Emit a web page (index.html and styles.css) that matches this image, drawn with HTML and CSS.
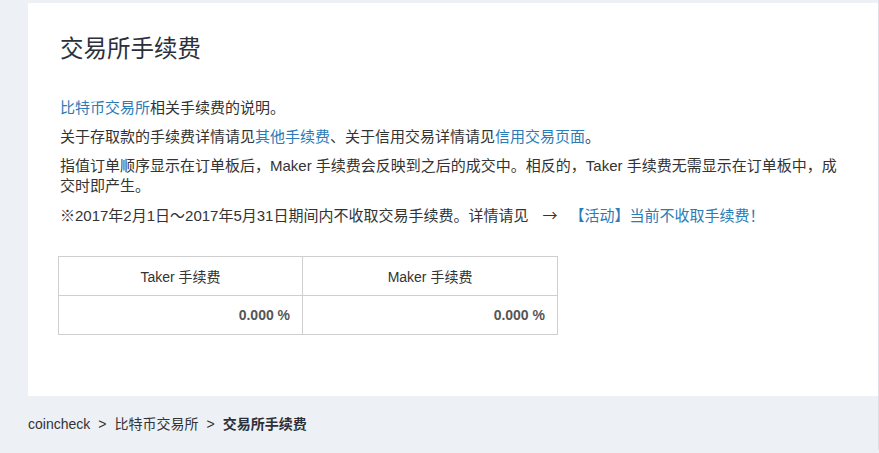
FILE: index.html
```html
<!DOCTYPE html>
<html lang="zh-CN">
<head>
<meta charset="utf-8">
<title>交易所手续费</title>
<link rel="stylesheet" href="styles.css">
</head>
<body>
<div class="page">
  <main class="card">
    <h1 class="title">交易所手续费</h1>
    <p class="para"><a class="link" href="#">比特币交易所</a>相关手续费的说明。</p>
    <p class="para">关于存取款的手续费详情请见<a class="link" href="#">其他手续费</a>、关于信用交易详情请见<a class="link" href="#">信用交易页面</a>。</p>
    <p class="para">指值订单顺序显示在订单板后，Maker 手续费会反映到之后的成交中。相反的，Taker 手续费无需显示在订单板中，成交时即产生。</p>
    <p class="para">※2017年2月1日～2017年5月31日期间内不收取交易手续费。详情请见<span class="arrow">→</span><a class="link" href="#">【活动】当前不收取手续费！</a></p>
    <table class="fees">
      <thead>
        <tr><th>Taker 手续费</th><th>Maker 手续费</th></tr>
      </thead>
      <tbody>
        <tr><td>0.000 %</td><td>0.000 %</td></tr>
      </tbody>
    </table>
  </main>
  <nav class="crumbs">
    <a class="crumb" href="#">coincheck</a><span class="sep">&gt;</span><a class="crumb" href="#">比特币交易所</a><span class="sep">&gt;</span><strong class="current">交易所手续费</strong>
  </nav>
</div>
</body>
</html>
```
FILE: styles.css
```css
html, body {
  margin: 0;
  padding: 0;
}
body {
  background: #edf0f5;
  font-family: "Liberation Sans", "Noto Sans CJK SC", sans-serif;
  color: #333;
  font-size: 14px;
  height: 453px;
  overflow: hidden;
}
.page {
  padding: 3px 0 0 28px;
  border-right: 1px solid #dcdfe4;
  height: 450px;
  box-sizing: border-box;
}
.card {
  background: #fff;
  padding: 31px 32px 61px 32px;
}
.title {
  margin: 0 0 34px;
  font-size: 23.5px;
  line-height: 30px;
  font-weight: normal;
  color: #2b303b;
}
.para {
  margin: 0 0 9px;
  font-size: 15px;
  line-height: 20px;
}
.link {
  color: #2b7bb7;
  text-decoration: none;
}
.arrow {
  font-family: "Noto Sans CJK SC", sans-serif;
  margin: 0 12px 0 14px;
}
.fees {
  margin: 30px 0 0 -2px;
  border-collapse: collapse;
  width: 500px;
}
.fees th, .fees td {
  border: 1px solid #cfcfcf;
  height: 38px;
  padding: 0 12px;
  font-size: 14px;
}
.fees th {
  font-weight: normal;
  text-align: center;
  color: #333;
}
.fees td {
  text-align: right;
  font-weight: bold;
  color: #555;
}
.crumbs {
  margin-top: 18px;
  line-height: 20px;
  font-size: 14px;
  color: #333;
}
.crumb {
  color: #333;
  text-decoration: none;
}
.sep {
  margin: 0 8px;
}
.current {
  color: #2b303b;
}
```
